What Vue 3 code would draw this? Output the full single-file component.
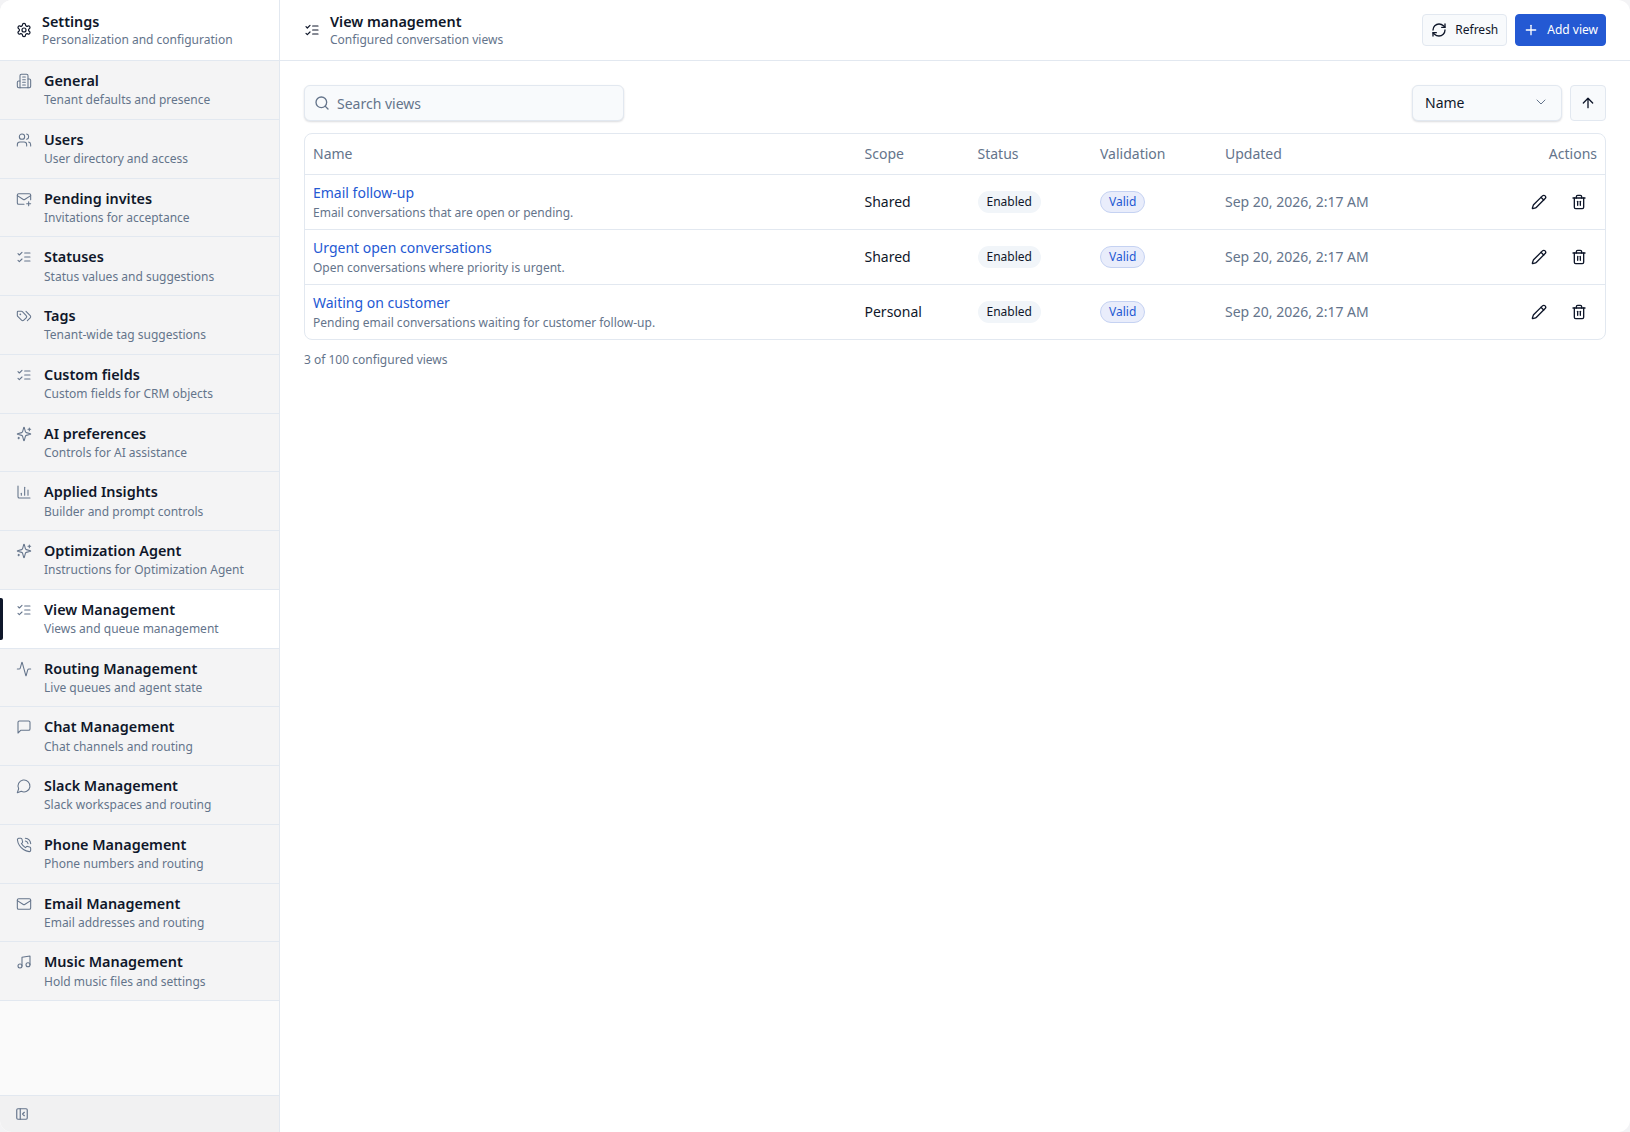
<script setup>
const listChecks = '<path d="m3 17 2 2 4-4"/><path d="m3 7 2 2 4-4"/><path d="M13 6h8"/><path d="M13 12h8"/><path d="M13 18h8"/>'
const sparkles = '<path d="M9.937 15.5A2 2 0 0 0 8.5 14.063l-6.135-1.582a.5.5 0 0 1 0-.962L8.5 9.936A2 2 0 0 0 9.937 8.5l1.582-6.135a.5.5 0 0 1 .963 0L14.063 8.5A2 2 0 0 0 15.5 9.937l6.135 1.581a.5.5 0 0 1 0 .964L15.5 14.063a2 2 0 0 0-1.437 1.437l-1.582 6.135a.5.5 0 0 1-.963 0z"/><path d="M20 3v4"/><path d="M22 5h-4"/><path d="M4 17v2"/><path d="M5 18H3"/>'

const icons = {
  settings: '<path d="M12.22 2h-.44a2 2 0 0 0-2 2v.18a2 2 0 0 1-1 1.73l-.43.25a2 2 0 0 1-2 0l-.15-.08a2 2 0 0 0-2.73.73l-.22.38a2 2 0 0 0 .73 2.73l.15.1a2 2 0 0 1 1 1.72v.51a2 2 0 0 1-1 1.74l-.15.09a2 2 0 0 0-.73 2.73l.22.38a2 2 0 0 0 2.73.73l.15-.08a2 2 0 0 1 2 0l.43.25a2 2 0 0 1 1 1.73V20a2 2 0 0 0 2 2h.44a2 2 0 0 0 2-2v-.18a2 2 0 0 1 1-1.73l.43-.25a2 2 0 0 1 2 0l.15.08a2 2 0 0 0 2.73-.73l.22-.39a2 2 0 0 0-.73-2.73l-.15-.08a2 2 0 0 1-1-1.74v-.5a2 2 0 0 1 1-1.74l.15-.09a2 2 0 0 0 .73-2.73l-.22-.38a2 2 0 0 0-2.73-.73l-.15.08a2 2 0 0 1-2 0l-.43-.25a2 2 0 0 1-1-1.73V4a2 2 0 0 0-2-2z"/><circle cx="12" cy="12" r="3"/>',
  building: '<path d="M6 22V4a2 2 0 0 1 2-2h8a2 2 0 0 1 2 2v18Z"/><path d="M6 12H4a2 2 0 0 0-2 2v6a2 2 0 0 0 2 2h2"/><path d="M18 9h2a2 2 0 0 1 2 2v9a2 2 0 0 1-2 2h-2"/><path d="M10 6h4"/><path d="M10 10h4"/><path d="M10 14h4"/><path d="M10 18h4"/>',
  users: '<path d="M16 21v-2a4 4 0 0 0-4-4H6a4 4 0 0 0-4 4v2"/><circle cx="9" cy="7" r="4"/><path d="M22 21v-2a4 4 0 0 0-3-3.87"/><path d="M16 3.13a4 4 0 0 1 0 7.75"/>',
  mailPlus: '<path d="M22 13V6a2 2 0 0 0-2-2H4a2 2 0 0 0-2 2v12c0 1.1.9 2 2 2h8"/><path d="m22 7-8.97 5.7a1.94 1.94 0 0 1-2.06 0L2 7"/><path d="M19 16v6"/><path d="M16 19h6"/>',
  listChecks,
  tags: '<path d="m15 5 6.3 6.3a2.4 2.4 0 0 1 0 3.4L17 19"/><path d="M9.586 5.586A2 2 0 0 0 8.172 5H3a1 1 0 0 0-1 1v5.172a2 2 0 0 0 .586 1.414L8.29 18.29a2.426 2.426 0 0 0 3.42 0l3.58-3.58a2.426 2.426 0 0 0 0-3.42z"/><circle cx="6.5" cy="9.5" r=".5" fill="currentColor"/>',
  sparkles,
  chart: '<path d="M3 3v16a2 2 0 0 0 2 2h16"/><path d="M18 17V9"/><path d="M13 17V5"/><path d="M8 17v-3"/>',
  activity: '<path d="M22 12h-2.48a2 2 0 0 0-1.93 1.46l-2.35 8.36a.25.25 0 0 1-.48 0L9.24 2.18a.25.25 0 0 0-.48 0l-2.35 8.36A2 2 0 0 1 4.49 12H2"/>',
  square: '<path d="M21 15a2 2 0 0 1-2 2H7l-4 4V5a2 2 0 0 1 2-2h14a2 2 0 0 1 2 2z"/>',
  circle: '<path d="M7.9 20A9 9 0 1 0 4 16.1L2 22Z"/>',
  phone: '<path d="M22 16.92v3a2 2 0 0 1-2.18 2 19.79 19.79 0 0 1-8.63-3.07 19.5 19.5 0 0 1-6-6 19.79 19.79 0 0 1-3.07-8.67A2 2 0 0 1 4.11 2h3a2 2 0 0 1 2 1.72 12.84 12.84 0 0 0 .7 2.81 2 2 0 0 1-.45 2.11L8.09 9.91a16 16 0 0 0 6 6l1.27-1.27a2 2 0 0 1 2.11-.45 12.84 12.84 0 0 0 2.81.7A2 2 0 0 1 22 16.92z"/><path d="M14.05 2a9 9 0 0 1 8 7.94"/><path d="M14.05 6A5 5 0 0 1 18 10"/>',
  mail: '<rect x="2" y="4" width="20" height="16" rx="2"/><path d="m22 7-8.97 5.7a1.94 1.94 0 0 1-2.06 0L2 7"/>',
  music: '<path d="M9 18V5l12-2v13"/><circle cx="6" cy="18" r="3"/><circle cx="18" cy="16" r="3"/>',
  panel: '<rect x="3" y="3" width="18" height="18" rx="2"/><path d="M9 3v18"/><path d="m16 15-3-3 3-3"/>',
  search: '<circle cx="11" cy="11" r="8"/><path d="m21 21-4.3-4.3"/>',
  refresh: '<path d="M3 12a9 9 0 0 1 9-9 9.75 9.75 0 0 1 6.74 2.74L21 8"/><path d="M21 3v5h-5"/><path d="M21 12a9 9 0 0 1-9 9 9.75 9.75 0 0 1-6.74-2.74L3 16"/><path d="M8 16H3v5"/>',
  plus: '<path d="M5 12h14"/><path d="M12 5v14"/>',
  chevron: '<path d="m6 9 6 6 6-6"/>',
  arrowUp: '<path d="m5 12 7-7 7 7"/><path d="M12 19V5"/>',
  pencil: '<path d="M21.174 6.812a1 1 0 0 0-3.986-3.987L3.842 16.174a2 2 0 0 0-.5.83l-1.321 4.352a.5.5 0 0 0 .623.622l4.353-1.32a2 2 0 0 0 .83-.497z"/><path d="m15 5 4 4"/>',
  trash: '<path d="M3 6h18"/><path d="M19 6v14c0 1-1 2-2 2H7c-1 0-2-1-2-2V6"/><path d="M8 6V4c0-1 1-2 2-2h4c1 0 2 1 2 2v2"/><path d="M10 11v6"/><path d="M14 11v6"/>'
}

const navItems = [
  { icon: 'building', title: 'General', sub: 'Tenant defaults and presence' },
  { icon: 'users', title: 'Users', sub: 'User directory and access' },
  { icon: 'mailPlus', title: 'Pending invites', sub: 'Invitations for acceptance' },
  { icon: 'listChecks', title: 'Statuses', sub: 'Status values and suggestions' },
  { icon: 'tags', title: 'Tags', sub: 'Tenant-wide tag suggestions' },
  { icon: 'listChecks', title: 'Custom fields', sub: 'Custom fields for CRM objects' },
  { icon: 'sparkles', title: 'AI preferences', sub: 'Controls for AI assistance' },
  { icon: 'chart', title: 'Applied Insights', sub: 'Builder and prompt controls' },
  { icon: 'sparkles', title: 'Optimization Agent', sub: 'Instructions for Optimization Agent' },
  { icon: 'listChecks', title: 'View Management', sub: 'Views and queue management', active: true },
  { icon: 'activity', title: 'Routing Management', sub: 'Live queues and agent state' },
  { icon: 'square', title: 'Chat Management', sub: 'Chat channels and routing' },
  { icon: 'circle', title: 'Slack Management', sub: 'Slack workspaces and routing' },
  { icon: 'phone', title: 'Phone Management', sub: 'Phone numbers and routing' },
  { icon: 'mail', title: 'Email Management', sub: 'Email addresses and routing' },
  { icon: 'music', title: 'Music Management', sub: 'Hold music files and settings' }
]

const views = [
  { name: 'Email follow-up', desc: 'Email conversations that are open or pending.', scope: 'Shared' },
  { name: 'Urgent open conversations', desc: 'Open conversations where priority is urgent.', scope: 'Shared' },
  { name: 'Waiting on customer', desc: 'Pending email conversations waiting for customer follow-up.', scope: 'Personal' }
]
</script>

<template>
  <div class="app">
    <aside class="sidebar">
      <div class="side-head">
        <svg class="icon head-icon" viewBox="0 0 24 24" v-html="icons.settings"></svg>
        <div>
          <div class="title">Settings</div>
          <div class="sub">Personalization and configuration</div>
        </div>
      </div>
      <nav class="nav">
        <a v-for="item in navItems" :key="item.title" class="nav-item" :class="{ active: item.active }">
          <svg class="icon nav-icon" viewBox="0 0 24 24" v-html="icons[item.icon]"></svg>
          <div>
            <div class="title">{{ item.title }}</div>
            <div class="sub">{{ item.sub }}</div>
          </div>
        </a>
      </nav>
      <div class="side-foot">
        <svg class="icon foot-icon" viewBox="0 0 24 24" v-html="icons.panel"></svg>
      </div>
    </aside>

    <main class="main">
      <header class="top">
        <svg class="icon head-icon top-icon" viewBox="0 0 24 24" v-html="icons.listChecks"></svg>
        <div class="top-text">
          <div class="title">View management</div>
          <div class="sub">Configured conversation views</div>
        </div>
        <div class="top-actions">
          <button class="btn">
            <svg class="icon" viewBox="0 0 24 24" v-html="icons.refresh"></svg>
            Refresh
          </button>
          <button class="btn primary">
            <svg class="icon" viewBox="0 0 24 24" v-html="icons.plus"></svg>
            Add view
          </button>
        </div>
      </header>

      <section class="content">
        <div class="toolbar">
          <label class="search">
            <svg class="icon" viewBox="0 0 24 24" v-html="icons.search"></svg>
            <span>Search views</span>
          </label>
          <div class="select">
            <span>Name</span>
            <svg class="icon" viewBox="0 0 24 24" v-html="icons.chevron"></svg>
          </div>
          <button class="sort-btn">
            <svg class="icon" viewBox="0 0 24 24" v-html="icons.arrowUp"></svg>
          </button>
        </div>

        <div class="table-wrap">
          <table>
            <colgroup>
              <col style="width: 551.5px" />
              <col style="width: 113px" />
              <col style="width: 122.5px" />
              <col style="width: 125px" />
              <col />
              <col style="width: 120px" />
            </colgroup>
            <thead>
              <tr>
                <th>Name</th>
                <th>Scope</th>
                <th>Status</th>
                <th>Validation</th>
                <th>Updated</th>
                <th class="right">Actions</th>
              </tr>
            </thead>
            <tbody>
              <tr v-for="view in views" :key="view.name">
                <td class="name-cell">
                  <div class="view-name">{{ view.name }}</div>
                  <div class="view-desc">{{ view.desc }}</div>
                </td>
                <td class="scope">{{ view.scope }}</td>
                <td><span class="badge">Enabled</span></td>
                <td><span class="badge valid">Valid</span></td>
                <td class="updated">Sep 20, 2026, 2:17 AM</td>
                <td>
                  <div class="actions">
                    <svg class="icon" viewBox="0 0 24 24" v-html="icons.pencil"></svg>
                    <svg class="icon" viewBox="0 0 24 24" v-html="icons.trash"></svg>
                  </div>
                </td>
              </tr>
            </tbody>
          </table>
        </div>
        <p class="count">3 of 100 configured views</p>
      </section>
    </main>
  </div>
</template>

<style>
html, body {
  margin: 0;
  background: #f3f3f5;
}
</style>

<style scoped>
.app {
  display: flex;
  height: 1132px;
  overflow: hidden;
  font-family: "Noto Sans", sans-serif;
  color: #0f172a;
  background: #fff;
  border-radius: 12px;
}

.icon {
  width: 16px;
  height: 16px;
  flex: none;
  fill: none;
  stroke: currentColor;
  stroke-width: 2;
  stroke-linecap: round;
  stroke-linejoin: round;
}

.title {
  font-size: 14.4px;
  line-height: 19px;
  font-weight: 600;
}

.sub {
  font-size: 12px;
  line-height: 18px;
  color: #64748b;
}

.sidebar {
  width: 279px;
  flex: none;
  display: flex;
  flex-direction: column;
  background: #fafafa;
  border-right: 1px solid #e2e8f0;
}

.side-head {
  height: 61px;
  box-sizing: border-box;
  display: flex;
  align-items: center;
  gap: 10px;
  padding: 0 16px;
  background: #fff;
  border-bottom: 1px solid #e2e8f0;
}

.nav {
  flex: 1;
}

.nav-item {
  position: relative;
  display: flex;
  gap: 12px;
  height: 58.75px;
  box-sizing: border-box;
  padding: 10px 16px 0;
  background: #f4f4f5;
  border-bottom: 1px solid #e2e8f0;
}

.nav-item .title {
  line-height: 20px;
}

.nav-item .sub {
  margin-top: 0.3px;
}

.nav-item.active {
  background: #fff;
}

.nav-item.active::before {
  content: "";
  position: absolute;
  left: 0;
  top: 8px;
  bottom: 8px;
  width: 3px;
  background: #0f172a;
  border-radius: 0 2px 2px 0;
}

.nav-icon {
  color: #64748b;
  margin-top: 2px;
  stroke-width: 1.6;
}

.head-icon {
  stroke-width: 1.8;
}

.side-foot {
  height: 36px;
  display: flex;
  align-items: center;
  padding: 0 15px;
  background: #f1f1f2;
  border-top: 1px solid #e2e8f0;
}

.foot-icon {
  width: 14px;
  height: 14px;
  color: #64748b;
}

.main {
  flex: 1;
  min-width: 0;
}

.top {
  height: 61px;
  box-sizing: border-box;
  display: flex;
  align-items: center;
  gap: 9px;
  padding: 0 24px;
  border-bottom: 1px solid #e2e8f0;
}

.top-text {
  flex: 1;
  margin-left: 1px;
}

.top-actions {
  display: flex;
  gap: 8px;
}

.btn {
  height: 32px;
  display: flex;
  align-items: center;
  gap: 8px;
  padding: 0 8px 2px;
  font: inherit;
  font-size: 12px;
  color: #0f172a;
  background: #f8fafc;
  border: 1px solid #e2e8f0;
  border-radius: 4px;
}

.btn .icon {
  margin-top: 2px;
}

.btn.primary {
  padding: 0 7px 2px;
  color: #fff;
  background: #2459d3;
  border-color: #2459d3;
}

.content {
  padding: 24px 24px 0;
}

.toolbar {
  display: flex;
  align-items: center;
  gap: 8px;
  margin-bottom: 12px;
}

.search {
  width: 320px;
  height: 36px;
  box-sizing: border-box;
  display: flex;
  align-items: center;
  gap: 7px;
  padding: 0 9px;
  margin-right: auto;
  font-size: 14px;
  color: #64748b;
  background: #f8fafc;
  border: 1px solid #e2e8f0;
  border-radius: 6px;
  box-shadow: 0 1px 2px rgba(15, 23, 42, 0.15);
}

.select {
  width: 150px;
  height: 36px;
  box-sizing: border-box;
  display: flex;
  align-items: center;
  justify-content: space-between;
  padding: 0 12px 2px;
  font-size: 14px;
  background: #f8fafc;
  border: 1px solid #e2e8f0;
  border-radius: 6px;
  box-shadow: 0 1px 2px rgba(15, 23, 42, 0.15);
}

.select .icon {
  color: #64748b;
  stroke-width: 1.5;
}

.sort-btn {
  width: 36px;
  height: 36px;
  display: flex;
  align-items: center;
  justify-content: center;
  padding: 0;
  color: #0f172a;
  background: #f8fafc;
  border: 1px solid #e2e8f0;
  border-radius: 4px;
}

.table-wrap {
  border: 1px solid #e2e8f0;
  border-radius: 8px;
  overflow: hidden;
}

table {
  width: 100%;
  table-layout: fixed;
  border-collapse: collapse;
}

th {
  height: 40px;
  padding: 0 8px;
  box-sizing: border-box;
  text-align: left;
  font-size: 14px;
  font-weight: 400;
  color: #64748b;
  border-bottom: 1px solid #e2e8f0;
}

th.right {
  text-align: right;
}

td {
  height: 54px;
  padding: 0 8px;
  font-size: 14px;
  border-bottom: 1px solid #e2e8f0;
}

td.name-cell {
  padding-top: 2px;
  box-sizing: border-box;
}

td.scope,
td.updated {
  padding-bottom: 1px;
  box-sizing: border-box;
}

tbody tr:last-child td {
  border-bottom: 0;
}

.view-name {
  font-size: 14px;
  line-height: 20px;
  color: #2459d3;
}

.view-desc {
  margin-top: 1px;
  font-size: 12px;
  line-height: 18px;
  color: #64748b;
}

.badge {
  display: inline-block;
  padding: 0 9px;
  font-size: 12px;
  line-height: 22px;
  background: #f1f5f9;
  border-radius: 11px;
}

.badge.valid {
  padding: 0 8px;
  line-height: 20px;
  color: #2459d3;
  background: #e9edfb;
  border: 1px solid #c5d2f2;
}

.updated {
  color: #64748b;
}

.actions {
  display: flex;
  justify-content: flex-end;
  gap: 24px;
  padding-right: 10px;
}

.count {
  margin: 11px 0 0;
  font-size: 12px;
  line-height: 18px;
  color: #64748b;
}
</style>
